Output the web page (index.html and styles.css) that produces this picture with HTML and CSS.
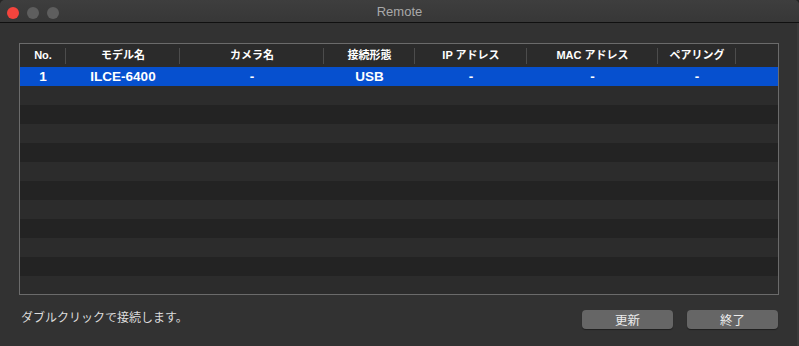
FILE: index.html
```html
<!DOCTYPE html>
<html lang="ja">

<head>
    <meta charset="UTF-8">
    <meta name="viewport" content="width=device-width, initial-scale=1.0">
    <title>Remote</title>
    <link rel="stylesheet" href="styles.css">
</head>

<body>
    <div class="window">
        <div class="titlebar">
            <div class="lights">
                <span class="light close"></span>
                <span class="light"></span>
                <span class="light"></span>
            </div>
            <div class="title">Remote</div>
            <div></div>
        </div>

        <div class="content">
            <div class="list">
                <div class="row head">
                    <div class="cell">No.</div>
                    <div class="cell">モデル名</div>
                    <div class="cell">カメラ名</div>
                    <div class="cell">接続形態</div>
                    <div class="cell">IP アドレス</div>
                    <div class="cell">MAC アドレス</div>
                    <div class="cell">ペアリング</div>
                    <div class="cell last"></div>
                </div>
                <div class="row selected">
                    <div class="cell">1</div>
                    <div class="cell">ILCE-6400</div>
                    <div class="cell">-</div>
                    <div class="cell">USB</div>
                    <div class="cell">-</div>
                    <div class="cell">-</div>
                    <div class="cell">-</div>
                    <div class="cell"></div>
                </div>
                <!-- empty striped rows -->
                <div class="row"></div>
                <div class="row"></div>
                <div class="row"></div>
                <div class="row"></div>
                <div class="row"></div>
                <div class="row"></div>
                <div class="row"></div>
                <div class="row"></div>
                <div class="row"></div>
                <div class="row"></div>
                <div class="row"></div>
            </div>

            <div class="footer">
                <p class="hint">ダブルクリックで接続します。</p>
                <div class="buttons">
                    <button class="btn">更新</button>
                    <button class="btn">終了</button>
                </div>
            </div>
        </div>
    </div>
</body>

</html>
```

FILE: styles.css
```css
body {
    margin: 0;
    background-color: #262626;
    font-family: "Liberation Sans", "Noto Sans CJK JP", sans-serif;
    color: #fff;
}

.window {
    width: 799px;
    height: 346px;
    background-color: #323232;
    border-radius: 5px 5px 0 0;
    overflow: hidden;
    box-shadow: inset -2px 0 0 #3a3a3a;
}

.titlebar {
    height: 22px;
    display: grid;
    grid-template-columns: 1fr auto 1fr;
    align-items: center;
    background: linear-gradient(#3e3e3e, #373737);
    border-bottom: 1px solid #101010;
}

.lights {
    display: flex;
    gap: 8px;
    padding: 3px 0 0 7px;
}

.light {
    width: 12px;
    height: 12px;
    border-radius: 50%;
    background-color: #5e5e5e;
}

.light.close {
    background-color: #f4443d;
}

.title {
    font-size: 13px;
    color: #a9a9a9;
    padding-top: 1px;
}

.content {
    padding: 20px 20px 0 19px;
}

.list {
    height: 250px;
    border: 1px solid #6b6b6b;
    overflow: hidden;
    background-color: #2a2a2a;
}

.row {
    display: grid;
    grid-template-columns: 46px 114px 144px 91px 112px 131px 78px 1fr;
    height: 19px;
    background-color: #232323;
}

.row:nth-child(odd) {
    background-color: #2c2c2c;
}

.row.head {
    height: 23px;
    background-color: #2b2b2b;
}

.row.selected {
    background-color: #0650cf;
}

.cell {
    text-align: center;
    font-weight: bold;
    font-size: 13.5px;
    line-height: 19px;
    white-space: nowrap;
}

.head .cell {
    font-size: 11px;
    line-height: 23px;
    background: linear-gradient(#4c4c4c, #4c4c4c) right center / 1px 16px no-repeat;
}

.head .cell.last {
    background: none;
}

.footer {
    display: flex;
    justify-content: space-between;
    align-items: flex-start;
    padding: 15px 1px 0 2px;
}

.hint {
    margin: 0;
    font-size: 12px;
    line-height: 16px;
    color: #dcdcdc;
}

.buttons {
    display: flex;
    gap: 14px;
}

.btn {
    width: 91px;
    height: 19px;
    padding: 0;
    border: none;
    border-radius: 4px;
    background-color: #666;
    color: #ececec;
    font-family: "Liberation Sans", "Noto Sans CJK JP", sans-serif;
    font-size: 12.5px;
    box-shadow: 0 1px 1px rgba(0, 0, 0, 0.4);
}
```
